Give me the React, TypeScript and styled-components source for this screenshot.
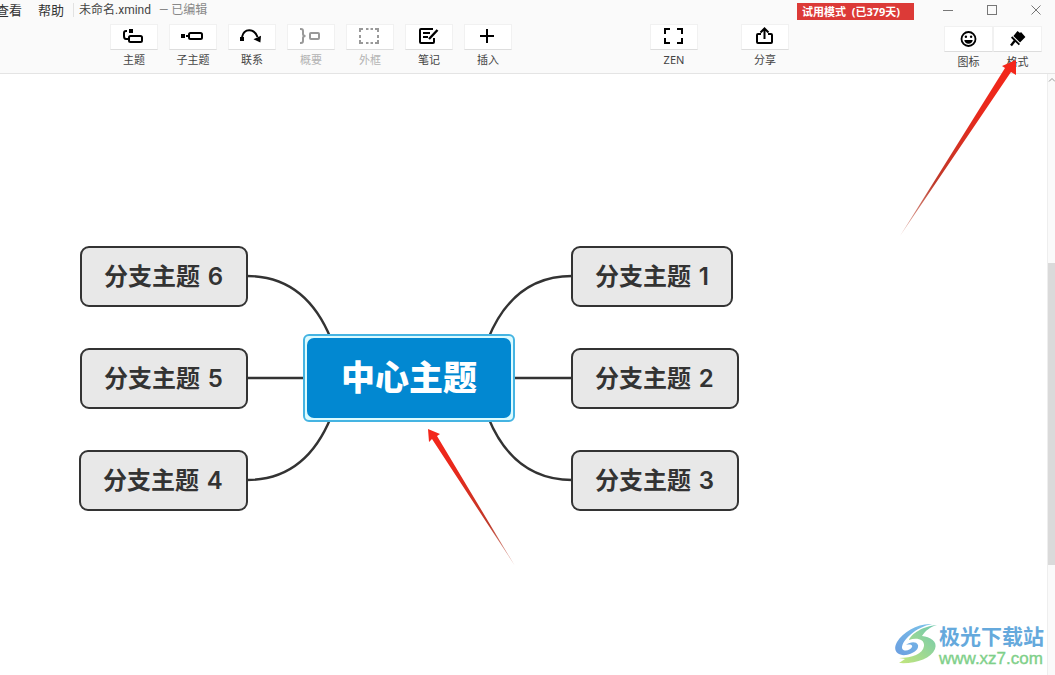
import React from "react";
import styled, { createGlobalStyle } from "styled-components";

const UI_FONT = '"Noto Sans", "Noto Sans CJK SC", sans-serif';
const INK = "#333333";

const GlobalStyle = createGlobalStyle`
  * { box-sizing: border-box; }
  body {
    margin: 0;
    background: #ffffff;
    color: ${INK};
    font-family: ${UI_FONT};
  }
  button { font: inherit; color: inherit; }
`;

const Page = styled.div`
  position: relative;
  display: flex;
  flex-direction: column;
  min-height: 100vh;
  overflow: hidden;
`;

const Header = styled.header`
  display: flex;
  justify-content: space-between;
  height: 74px;
  background: #fafafa;
  border-bottom: 1px solid #e4e4e4;
`;

const HeaderMain = styled.div`
  flex: 1;
  display: flex;
  flex-direction: column;
  gap: 4px;
`;

const HeaderSide = styled.div`
  display: flex;
  flex-direction: column;
  gap: 6px;
`;

const MenuBar = styled.nav`
  display: flex;
  align-items: center;
  height: 20px;
  margin-left: -4px;
  white-space: nowrap;
`;

const MenuItem = styled.button`
  margin-right: 16px;
  padding: 0;
  border: 0;
  background: none;
  font-size: 13px;
  line-height: 20px;
`;

const FileName = styled.span`
  margin-left: -7px;
  padding-left: 5px;
  border-left: 1px solid #e2e2e2;
  font-family: Roboto, "Noto Sans CJK SC", sans-serif;
  font-size: 12px;
  line-height: 14px;
  color: #444444;
`;

const FileState = styled.span`
  margin-left: 8px;
  font-family: Roboto, "Noto Sans CJK SC", sans-serif;
  font-size: 12px;
  line-height: 14px;
  color: #888888;
`;

const ToolBar = styled.div`
  display: flex;
  justify-content: space-between;
  padding: 0 8px 0 110px;
`;

const ToolGroup = styled.div<{ $gap: number }>`
  display: flex;
  gap: ${(p) => p.$gap}px;
`;

const ToolButton = styled.button<{ $width: number }>`
  display: flex;
  flex-direction: column;
  align-items: center;
  gap: 2px;
  width: ${(p) => p.$width}px;
  padding: 0;
  border: 0;
  background: none;
  color: #000000;
  &:disabled { color: #999999; }
`;

const ToolFace = styled.span`
  display: flex;
  align-items: center;
  justify-content: center;
  width: 100%;
  height: 26px;
  background: #ffffff;
  border: 1px solid #f1f1f1;
  border-bottom-color: #dddddd;
`;

const ToolLabel = styled.span<{ $muted?: boolean }>`
  font-size: 11px;
  line-height: 16px;
  color: ${(p) => (p.$muted ? "#b4b4b4" : "#444444")};
`;

const WindowRow = styled.div`
  display: flex;
  align-items: center;
  gap: 15px;
  height: 20px;
`;

const TrialBadge = styled.span`
  width: 117px;
  margin-top: 3px;
  padding-left: 5px;
  background: #dc3a37;
  color: #ffffff;
  font-size: 11px;
  font-weight: 700;
  line-height: 17px;
  white-space: nowrap;
`;

const WindowControls = styled.div`
  display: flex;
  gap: 6px;
`;

const WindowButton = styled.button`
  display: flex;
  align-items: center;
  justify-content: center;
  width: 38px;
  height: 20px;
  padding: 0;
  border: 0;
  background: none;
  color: #777777;
`;

const PanelTools = styled.div`
  display: flex;
  justify-content: flex-end;
  padding-right: 13px;
`;

const Workspace = styled.main`
  flex: 1;
  display: flex;
`;

const Canvas = styled.section`
  position: relative;
  flex: 1;
  background: #ffffff;
`;

const Links = styled.svg`
  position: absolute;
  left: 0;
  top: 0;
`;

const Topic = styled.div<{ $x: number; $y: number; $w: number }>`
  position: absolute;
  left: ${(p) => p.$x}px;
  top: ${(p) => p.$y}px;
  width: ${(p) => p.$w}px;
  height: 61px;
  padding-left: 22px;
  border: 2px solid ${INK};
  border-radius: 9px;
  background: #e8e8e8;
  font-family: Inter, "Noto Sans CJK SC", sans-serif;
  font-size: 24px;
  font-weight: 700;
  line-height: 58px;
  white-space: pre;
`;

const TopicNumber = styled.span`
  margin-left: 2px;
  font-weight: 600;
`;

const Selection = styled.div`
  position: absolute;
  left: 303px;
  top: 260px;
  width: 212px;
  height: 88px;
  padding: 2px;
  border: 2px solid #45b4e2;
  border-radius: 6px;
  background: #dcfbff;
`;

const CentralTopic = styled.div`
  height: 80px;
  border-radius: 7px;
  background: #0288d1;
  color: #ffffff;
  font-family: "Noto Sans CJK SC", sans-serif;
  font-size: 34px;
  font-weight: 900;
  line-height: 76px;
  text-align: center;
`;

const ScrollBar = styled.div`
  display: flex;
  flex-direction: column;
  width: 8px;
  background: #fafafa;
  border-left: 1px solid #eeeeee;
`;

const ScrollSpace = styled.div<{ $share: number }>`
  flex: ${(p) => p.$share} 1 0;
`;

const ScrollThumb = styled.div`
  flex: 302 1 0;
  background: #dadada;
`;

const Pointer = styled.svg`
  position: absolute;
  pointer-events: none;
`;

const FormatPointer = styled(Pointer)`
  right: 34px;
  top: 56px;
`;

const TopicPointer = styled(Pointer)`
  left: 420px;
  top: 424px;
`;

const Watermark = styled.div`
  position: absolute;
  right: 11px;
  bottom: 7px;
  display: flex;
  align-items: center;
  gap: 1px;
`;

const WatermarkText = styled.div`
  display: flex;
  flex-direction: column;
  width: 105px;
  white-space: nowrap;
`;

const SiteName = styled.span`
  color: #65a9dc;
  font-family: "Noto Sans CJK SC", sans-serif;
  font-size: 21px;
  font-weight: 700;
  line-height: 30px;
`;

const SiteUrl = styled.a`
  color: #7fd08a;
  font-family: "Liberation Sans", sans-serif;
  font-size: 17px;
  line-height: 18px;
  text-decoration: none;
  -webkit-text-stroke: 0.4px #7fd08a;
`;

const Icon = ({ children }: { children: React.ReactNode }) => (
  <svg width="24" height="20" viewBox="0 0 24 20" fill="none" stroke="currentColor" strokeWidth="2" aria-hidden="true">
    {children}
  </svg>
);

const icons = {
  topic: (
    <Icon>
      <rect x="7" y="2" width="4" height="4" fill="currentColor" stroke="none" />
      <path d="M5 4H4Q2 4 2 6V9Q2 12 4 12H7" />
      <rect x="7" y="9" width="13" height="6" rx="1.5" />
    </Icon>
  ),
  subtopic: (
    <Icon>
      <rect x="0" y="7" width="4" height="4" fill="currentColor" stroke="none" />
      <path d="M5 9H8" />
      <rect x="8" y="6" width="13" height="6" rx="1.5" />
    </Icon>
  ),
  relation: (
    <Icon>
      <rect x="0" y="10" width="4" height="4" fill="currentColor" stroke="none" />
      <path d="M2 10C4 1 14 1 17.5 10" />
      <path d="M13.5 12.3L21 8.7L20.4 15.6Z" fill="currentColor" stroke="none" />
    </Icon>
  ),
  summary: (
    <Icon>
      <path d="M1 2H2Q4 2 4 4V7Q4 9 6.5 9Q4 9 4 11V14Q4 16 2 16H1" />
      <rect x="11" y="6" width="9" height="6" rx="1" />
    </Icon>
  ),
  boundary: (
    <Icon>
      <path d="M2 5V2H5M8 2H10.5M12.5 2H15M17 2H20V5M20 8V11M20 13V16H17M15 16H12.5M10.5 16H8M5 16H2V13M2 11V8" />
    </Icon>
  ),
  note: (
    <Icon>
      <path d="M16 2H4Q3 2 3 3V15Q3 16 4 16H16Q17 16 17 15V11" />
      <path d="M6 6H13M6 10H11" />
      <path d="M20.5 3L12 12" strokeWidth="2.4" />
    </Icon>
  ),
  insert: (
    <Icon>
      <path d="M11 2V16M4 9H18" />
    </Icon>
  ),
  zen: (
    <Icon>
      <path d="M3 7V2H8M15 2H20V7M20 11V16H15M8 16H3V11" />
    </Icon>
  ),
  share: (
    <Icon>
      <path d="M8 7H5Q4 7 4 8V15Q4 16 5 16H18Q19 16 19 15V8Q19 7 18 7H15" />
      <path d="M11.5 12V2M7.5 5.5L11.5 1.5L15.5 5.5" />
    </Icon>
  ),
  face: (
    <Icon>
      <circle cx="11.5" cy="10" r="7" strokeWidth="1.8" />
      <circle cx="8.9" cy="7.8" r="1.2" fill="currentColor" stroke="none" />
      <circle cx="14.1" cy="7.8" r="1.2" fill="currentColor" stroke="none" />
      <path d="M7.3 11H15.7Q15.1 14.8 11.5 14.8Q7.9 14.8 7.3 11Z" fill="currentColor" stroke="none" />
    </Icon>
  ),
  brush: (
    <Icon>
      <path d="M11.5 2L14 4L15 3L19.4 8L14 13.4L7.4 7Z" fill="currentColor" stroke="none" />
      <path d="M5.6 8L13.4 15.6" strokeWidth="1.8" />
      <path d="M9 11.6L5 16.4" strokeWidth="2.4" />
    </Icon>
  ),
};

type ToolSpec = { icon: keyof typeof icons; label: string; disabled?: boolean };

const Tool = ({ icon, label, disabled, width = 48 }: ToolSpec & { width?: number }) => (
  <ToolButton type="button" $width={width} disabled={disabled}>
    <ToolFace>{icons[icon]}</ToolFace>
    <ToolLabel $muted={disabled}>{label}</ToolLabel>
  </ToolButton>
);

const editTools: ToolSpec[] = [
  { icon: "topic", label: "主题" },
  { icon: "subtopic", label: "子主题" },
  { icon: "relation", label: "联系" },
  { icon: "summary", label: "概要", disabled: true },
  { icon: "boundary", label: "外框", disabled: true },
  { icon: "note", label: "笔记" },
  { icon: "insert", label: "插入" },
];

const topics = [
  { n: 6, x: 80, y: 172, w: 168 },
  { n: 5, x: 80, y: 274, w: 168 },
  { n: 4, x: 79, y: 376, w: 169 },
  { n: 1, x: 571, y: 172, w: 162 },
  { n: 2, x: 571, y: 274, w: 168 },
  { n: 3, x: 571, y: 376, w: 168 },
];

export default function App() {
  return (
    <Page>
      <GlobalStyle />
      <Header>
        <HeaderMain>
          <MenuBar>
            <MenuItem type="button">查看</MenuItem>
            <MenuItem type="button">帮助</MenuItem>
            <FileName>未命名.xmind</FileName>
            <FileState>— 已编辑</FileState>
          </MenuBar>
          <ToolBar>
            <ToolGroup $gap={11}>
              {editTools.map((t) => (
                <Tool key={t.label} {...t} />
              ))}
            </ToolGroup>
            <ToolGroup $gap={43}>
              <Tool icon="zen" label="ZEN" />
              <Tool icon="share" label="分享" />
            </ToolGroup>
          </ToolBar>
        </HeaderMain>
        <HeaderSide>
          <WindowRow>
            <TrialBadge>试用模式&nbsp; (已379天)</TrialBadge>
            <WindowControls>
              <WindowButton type="button" aria-label="最小化">
                <svg width="12" height="12" stroke="currentColor"><path d="M1 6.5H11" /></svg>
              </WindowButton>
              <WindowButton type="button" aria-label="最大化">
                <svg width="12" height="12" stroke="currentColor" fill="none"><rect x="1.5" y="1.5" width="9" height="9" /></svg>
              </WindowButton>
              <WindowButton type="button" aria-label="关闭">
                <svg width="12" height="12" stroke="currentColor"><path d="M1.5 1.5L10.5 10.5M10.5 1.5L1.5 10.5" /></svg>
              </WindowButton>
            </WindowControls>
          </WindowRow>
          <PanelTools>
            <Tool icon="face" label="图标" width={49} />
            <Tool icon="brush" label="格式" width={49} />
          </PanelTools>
        </HeaderSide>
      </Header>

      <Workspace>
        <Canvas>
          <Links width="760" height="460" fill="none" stroke={INK} strokeWidth="2.4">
            <path d="M247 202C290 202 316 228 331 265" />
            <path d="M247 304H305" />
            <path d="M247 406C290 406 316 380 331 343" />
            <path d="M572 202C529 202 503 228 488 265" />
            <path d="M513 304H572" />
            <path d="M572 406C529 406 503 380 488 343" />
          </Links>
          {topics.map((t) => (
            <Topic key={t.n} $x={t.x} $y={t.y} $w={t.w}>
              {"分支主题 "}
              <TopicNumber>{t.n}</TopicNumber>
            </Topic>
          ))}
          <Selection>
            <CentralTopic>中心主题</CentralTopic>
          </Selection>
        </Canvas>
        <ScrollBar>
          <svg width="7" height="12" fill="none" stroke="#999999"><path d="M1 7.5L4 4.5L7 7.5" /></svg>
          <ScrollSpace $share={177} />
          <ScrollThumb />
          <ScrollSpace $share={110} />
        </ScrollBar>
      </Workspace>

      <FormatPointer width="126" height="184" aria-hidden="true">
        <defs>
          <linearGradient id="formatFade" gradientUnits="userSpaceOnUse" x1="6" y1="180" x2="121" y2="6">
            <stop offset="0" stopColor="#b8442f" stopOpacity="0.4" />
            <stop offset="0.3" stopColor="#bf3a2a" />
            <stop offset="0.7" stopColor="#e8291c" />
            <stop offset="1" stopColor="#f5261a" />
          </linearGradient>
        </defs>
        <path d="M121 4L121 19L116 16L5 180L110 12L107 10Z" fill="url(#formatFade)" />
      </FormatPointer>
      <TopicPointer width="100" height="146" aria-hidden="true">
        <defs>
          <linearGradient id="topicFade" gradientUnits="userSpaceOnUse" x1="95" y1="142" x2="8" y2="5">
            <stop offset="0" stopColor="#b8442f" stopOpacity="0.4" />
            <stop offset="0.3" stopColor="#bf3a2a" />
            <stop offset="0.7" stopColor="#e8291c" />
            <stop offset="1" stopColor="#f5261a" />
          </linearGradient>
        </defs>
        <path d="M8 5L20 10L17 12L95 142L12 15L9 18Z" fill="url(#topicFade)" />
      </TopicPointer>

      <Watermark>
        <svg width="44" height="42" viewBox="0 0 44 42" aria-hidden="true">
          <defs>
            <linearGradient id="swirlBlue" x1="0" y1="1" x2="1" y2="0">
              <stop offset="0" stopColor="#6b9ee0" />
              <stop offset="1" stopColor="#7cc4ea" />
            </linearGradient>
            <linearGradient id="swirlGreen" x1="0" y1="1" x2="1" y2="0">
              <stop offset="0" stopColor="#c3e67c" />
              <stop offset="1" stopColor="#6fc8b0" />
            </linearGradient>
          </defs>
          <path d="M38 1C24 0 9 9 3 19C-2 28 4 33 12 32C19 31 25 27 24 22C22 18 16 19 12 22C16 21 19 22 18 24C16 28 9 29 8 25C8 17 22 4 38 1Z" fill="url(#swirlBlue)" />
          <path d="M43 2C29 3 17 11 15 17C22 14 31 16 30 23C29 31 18 35 5 35L11 36L5 40C21 41 37 36 41 26C44 18 36 14 28 13C31 8 36 4 43 2Z" fill="url(#swirlGreen)" />
        </svg>
        <WatermarkText>
          <SiteName>极光下载站</SiteName>
          <SiteUrl href="#">www.xz7.com</SiteUrl>
        </WatermarkText>
      </Watermark>
    </Page>
  );
}
